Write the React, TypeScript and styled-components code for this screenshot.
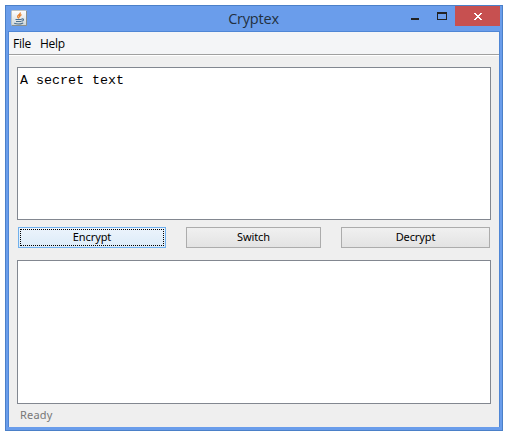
import React from "react";
import styled, { createGlobalStyle } from "styled-components";

const GlobalStyle = createGlobalStyle`
  * { box-sizing: border-box; }
  body { margin: 0; background: #fff; overflow: hidden; }
  button, textarea { font: inherit; margin: 0; padding: 0; border-radius: 0; outline: none; }
`;

const Desktop = styled.div`
  width: 509px;
  height: 437px;
  padding: 5px 6px 6px 5px;
`;

const Frame = styled.div`
  height: 426px;
  display: flex;
  flex-direction: column;
  padding: 0 2px 3px;
  border: 1px solid #4b80c8;
  background: #6a9deb;
`;

const TitleBar = styled.header`
  height: 25px;
  flex: none;
  display: grid;
  grid-template-columns: 92px 1fr 96px;
`;

const AppIcon = styled.svg`
  margin: 4px 0 0 3px;
`;

const Title = styled.h1`
  margin: 0;
  padding: 1px 0 0 3px;
  text-align: center;
  font: 400 14.5px/24px "Open Sans", sans-serif;
  letter-spacing: -0.2px;
  color: #22303f;
`;

const Controls = styled.div`
  display: flex;
  justify-content: flex-end;
`;

const ControlButton = styled.button<{ $width: number; $close?: boolean }>`
  width: ${(p) => p.$width}px;
  height: 20px;
  flex: none;
  border: 0;
  background: ${(p) => (p.$close ? "#c75050" : "transparent")};
  svg { display: block; }
`;

const Client = styled.div`
  flex: 1;
  display: flex;
  flex-direction: column;
  border: 1px solid #4f86d5;
  border-bottom: 0;
  background: #efefef;
`;

const MenuBar = styled.nav`
  height: 24px;
  flex: none;
  display: flex;
  gap: 9px;
  padding-left: 4px;
  background: #f4f5f7;
  border-bottom: 1px solid #fff;
  box-shadow: inset 0 -1px #a0a0a0;
`;

const MenuItem = styled.span`
  font: 400 12px/24px "Open Sans", sans-serif;
  letter-spacing: -0.25px;
  color: #000;
`;

const Body = styled.main`
  flex: 1;
  display: flex;
  flex-direction: column;
  padding: 11px 8px 0;
`;

const TextBox = styled.textarea<{ $height: number }>`
  display: block;
  flex: none;
  height: ${(p) => p.$height}px;
  padding: 5px 2px;
  border: 1px solid #828790;
  background: #fff;
  color: #000;
  resize: none;
  font: 400 13.33px/16px "Liberation Mono", monospace;
`;

const ButtonRow = styled.div`
  display: grid;
  grid-template-columns: 148px 135px 149px;
  gap: 20px;
  height: 21px;
  flex: none;
  margin: 7px 0 12px 1px;
`;

const ActionButton = styled.button<{ $focused?: boolean }>`
  display: flex;
  padding: 1px;
  border: 1px solid ${(p) => (p.$focused ? "#70b0ed" : "#acacac")};
  background: ${(p) =>
    p.$focused
      ? "linear-gradient(#ecf4fc, #dcebf8)"
      : "linear-gradient(#f0f0f0, #e3e3e3)"};
  color: #000;
`;

const ButtonLabel = styled.span<{ $focused?: boolean }>`
  flex: 1;
  height: 17px;
  border: 1px dotted ${(p) => (p.$focused ? "#000" : "transparent")};
  font: 400 11px/13px "Noto Sans", sans-serif;
  letter-spacing: -0.1px;
  text-align: center;
`;

const Status = styled.footer`
  height: 22px;
  padding-left: 3px;
  font: 400 11px/22px "Noto Sans", sans-serif;
  letter-spacing: 0.2px;
  color: #777;
`;

const JavaIcon = () => (
  <AppIcon width="17" height="17" viewBox="0 0 17 17">
    <defs>
      <linearGradient id="tile" x2="0" y2="1">
        <stop stopColor="#fff" />
        <stop offset="1" stopColor="#ced6d9" />
      </linearGradient>
    </defs>
    <rect x=".5" y=".5" width="15" height="15" rx="1" fill="url(#tile)" stroke="#bfc4c2" />
    <path d="M1 15.5h14.5V1" fill="none" stroke="#8a8f8c" />
    <path d="M9.2 2.5c.7 2-3.2 2.6-2.5 4.4l1.2 1.5M10.5 4.6C8.5 5.5 8.2 6.2 9 7.2" fill="none" stroke="#e8802a" strokeWidth="1.4" />
    <path d="M4.5 9.5h6M5 11.5h5M3.2 13.3c2.5.9 6.4.8 9-.4M10.5 9c3-.6 2.4 2-.3 2.3" fill="none" stroke="#4a6f90" strokeWidth="1.1" />
  </AppIcon>
);

export default function App() {
  return (
    <>
      <GlobalStyle />
      <Desktop>
        <Frame>
          <TitleBar>
            <JavaIcon />
            <Title>Cryptex</Title>
            <Controls>
              <ControlButton $width={26} aria-label="Minimize">
                <svg width="26" height="20"><path d="M7 12h8v2H7z" fill="#222" /></svg>
              </ControlButton>
              <ControlButton $width={25} aria-label="Maximize">
                <svg width="25" height="20"><path d="M7 6h10v8H7zM8 8v5h8V8z" fill="#222" fillRule="evenodd" /></svg>
              </ControlButton>
              <ControlButton $width={45} $close aria-label="Close">
                <svg width="45" height="20">
                  <path d="M19 7h2v1h1v1h2V8h1V7h2v1h-1v1h-1v1h-1v1h1v1h1v1h1v1h-2v-1h-1v-1h-2v1h-1v1h-2v-1h1v-1h1v-1h1v-1h-1V9h-1V8h-1z" fill="#fff" />
                </svg>
              </ControlButton>
            </Controls>
          </TitleBar>
          <Client>
            <MenuBar>
              <MenuItem>File</MenuItem>
              <MenuItem>Help</MenuItem>
            </MenuBar>
            <Body>
              <TextBox $height={153} defaultValue="A secret text" spellCheck={false} />
              <ButtonRow>
                <ActionButton $focused><ButtonLabel $focused>Encrypt</ButtonLabel></ActionButton>
                <ActionButton><ButtonLabel>Switch</ButtonLabel></ActionButton>
                <ActionButton><ButtonLabel>Decrypt</ButtonLabel></ActionButton>
              </ButtonRow>
              <TextBox $height={144} spellCheck={false} />
              <Status>Ready</Status>
            </Body>
          </Client>
        </Frame>
      </Desktop>
    </>
  );
}
